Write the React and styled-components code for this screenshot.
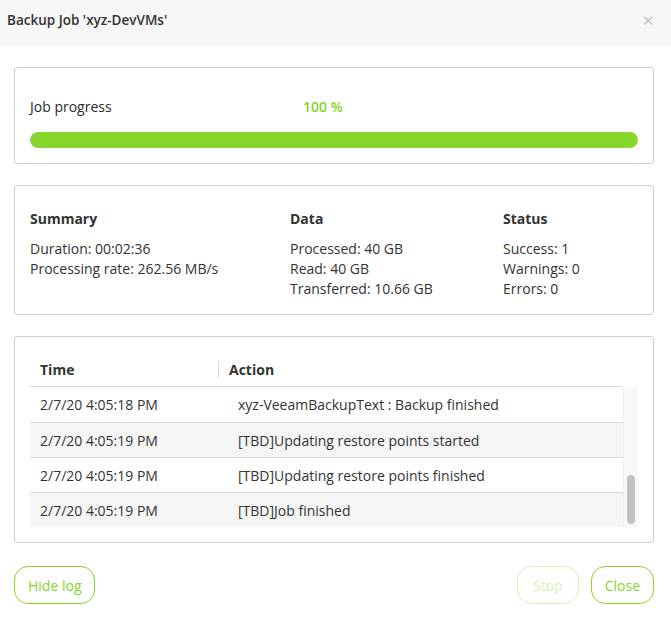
import styled, { createGlobalStyle } from 'styled-components';

const GlobalStyle = createGlobalStyle`
  body {
    margin: 0;
    background: #fff;
    font-family: "Open Sans", "Liberation Sans", sans-serif;
    font-size: 14px;
    color: #333;
  }
`;

const green = '#87d62b';

const Dialog = styled.div`
  width: 671px;
  height: 632px;
  display: flex;
  flex-direction: column;
`;

const Header = styled.div`
  height: 46px;
  background: #f7f7f7;
  display: flex;
  align-items: center;
  justify-content: space-between;
  padding: 0 16px 6px 7px;
  box-sizing: border-box;
`;

const Title = styled.div`
  font-size: 13.5px;
  font-weight: 600;
  color: #333;
`;

const CloseX = styled.span`
  color: #c4c4c4;
  font-size: 15px;
  line-height: 1;
`;

const Body = styled.div`
  display: flex;
  flex-direction: column;
  gap: 21px;
  padding: 21px 17px 0 14px;
`;

const Panel = styled.div`
  border: 1px solid #cfcfcf;
  border-radius: 3px;
  padding: ${(p) => p.$pad || '0 15px'};
`;

const ProgressRow = styled.div`
  display: grid;
  grid-template-columns: 273px auto;
  line-height: 20px;
  margin-bottom: 15px;
  color: #2a2a2a;
`;

const Percent = styled.span`
  color: ${green};
  font-weight: 600;
`;

const Bar = styled.div`
  height: 16px;
  border-radius: 8px;
  background: #e8e8e8;
  overflow: hidden;
`;

const Fill = styled.div`
  height: 100%;
  background: ${green};
  border-radius: 8px;
`;

const Stats = styled.div`
  display: grid;
  grid-template-columns: 260px 213px 1fr;
  line-height: 20px;
`;

const Heading = styled.div`
  font-weight: 700;
  margin-bottom: 10px;
`;

const LogTable = styled.div`
  display: grid;
  grid-template-columns: 1fr 15px;
`;

const HeadRow = styled.div`
  grid-column: 1 / 3;
  display: flex;
  align-items: center;
  height: 35px;
  padding-bottom: 0;
  box-sizing: border-box;
  margin-right: 16px;
  border-bottom: 1px solid #d9d9d9;
  font-weight: 700;
`;

const HeadCell = styled.div`
  width: ${(p) => p.$w || 'auto'};
  padding-left: 10px;
  box-sizing: border-box;
  border-left: ${(p) => (p.$sep ? '1px solid #d9d9d9' : 'none')};
  line-height: 17px;
`;

const Rows = styled.div`
  display: flex;
  flex-direction: column;
`;

const Row = styled.div`
  display: flex;
  align-items: center;
  height: 35px;
  background: ${(p) => (p.$alt ? '#f5f5f5' : '#fff')};
  border-top: ${(p) => (p.$first ? 'none' : '1px solid #d9d9d9')};
  box-sizing: border-box;
`;

const TimeCell = styled.div`
  width: 188px;
  padding-left: 10px;
  box-sizing: border-box;
`;

const ActionCell = styled.div`
  padding-left: 20px;
`;

const Track = styled.div`
  background: #f8f8f8;
  border-left: 1px solid #eee;
  position: relative;
`;

const Thumb = styled.div`
  position: absolute;
  left: 3px;
  right: 3px;
  bottom: 3px;
  height: 49px;
  border-radius: 4px;
  background: #c2c2c2;
`;

const Footer = styled.div`
  display: flex;
  gap: 12px;
  padding: 23px 17px 0 14px;
`;

const Button = styled.button`
  height: 38px;
  padding: 0 ${(p) => p.$px || 13}px;
  border-radius: 14px;
  background: #fff;
  border: 1px solid ${green};
  color: ${green};
  font-family: "Open Sans", "Liberation Sans", sans-serif;
  font-size: 14px;
  opacity: ${(p) => (p.disabled ? 0.35 : 1)};
  margin-left: ${(p) => (p.$push ? 'auto' : '0')};
`;

const log = [
  ['2/7/20 4:05:18 PM', 'xyz-VeeamBackupText : Backup finished'],
  ['2/7/20 4:05:19 PM', '[TBD]Updating restore points started'],
  ['2/7/20 4:05:19 PM', '[TBD]Updating restore points finished'],
  ['2/7/20 4:05:19 PM', '[TBD]Job finished'],
];

export default function App() {
  return (
    <Dialog>
      <GlobalStyle />
      <Header>
        <Title>Backup Job 'xyz-DevVMs'</Title>
        <CloseX>✕</CloseX>
      </Header>
      <Body>
        <Panel $pad="29px 15px 15px">
          <ProgressRow>
            <span>Job progress</span>
            <Percent>100 %</Percent>
          </ProgressRow>
          <Bar>
            <Fill style={{ width: '100%' }} />
          </Bar>
        </Panel>
        <Panel $pad="23px 15px 15px">
          <Stats>
            <div>
              <Heading>Summary</Heading>
              <div>Duration: 00:02:36</div>
              <div>Processing rate: 262.56 MB/s</div>
            </div>
            <div>
              <Heading>Data</Heading>
              <div>Processed: 40 GB</div>
              <div>Read: 40 GB</div>
              <div>Transferred: 10.66 GB</div>
            </div>
            <div>
              <Heading>Status</Heading>
              <div>Success: 1</div>
              <div>Warnings: 0</div>
              <div>Errors: 0</div>
            </div>
          </Stats>
        </Panel>
        <Panel $pad="15px 15px 15px">
          <LogTable>
            <HeadRow>
              <HeadCell $w="188px">Time</HeadCell>
              <HeadCell $sep>Action</HeadCell>
            </HeadRow>
            <Rows>
              {log.map(([t, a], i) => (
                <Row key={i} $alt={i % 2 === 1} $first={i === 0}>
                  <TimeCell>{t}</TimeCell>
                  <ActionCell>{a}</ActionCell>
                </Row>
              ))}
            </Rows>
            <Track>
              <Thumb />
            </Track>
          </LogTable>
        </Panel>
      </Body>
      <Footer>
        <Button>Hide log</Button>
        <Button $push $px={15} disabled>
          Stop
        </Button>
        <Button $px={13}>Close</Button>
      </Footer>
    </Dialog>
  );
}
